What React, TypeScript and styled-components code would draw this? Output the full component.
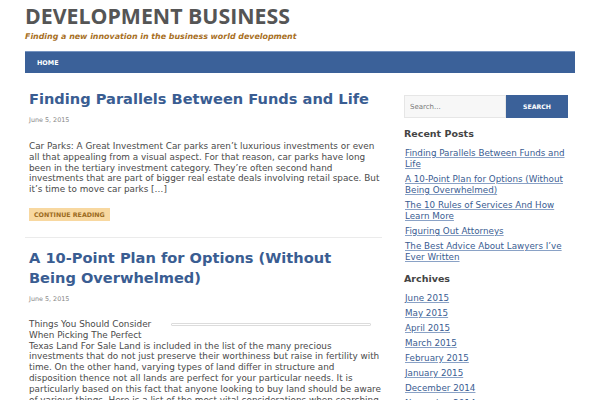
import React from 'react';
import styled, { createGlobalStyle } from 'styled-components';

const GlobalStyle = createGlobalStyle`
  html, body {
    margin: 0;
    padding: 0;
    background: #fff;
    overflow: hidden;
  }
  body {
    font-family: "DejaVu Sans", "Liberation Sans", sans-serif;
    color: #4a4a4a;
  }
`;

const recentPosts = [
  'Finding Parallels Between Funds and Life',
  'A 10-Point Plan for Options (Without Being Overwhelmed)',
  'The 10 Rules of Services And How Learn More',
  'Figuring Out Attorneys',
  'The Best Advice About Lawyers I’ve Ever Written',
];

const archives = [
  'June 2015',
  'May 2015',
  'April 2015',
  'March 2015',
  'February 2015',
  'January 2015',
  'December 2014',
  'November 2014',
];

const App = () => {
  return (
    <>
      <GlobalStyle />
      <Page>
        <Header>
          <SiteTitle>DEVELOPMENT BUSINESS</SiteTitle>
          <Tagline>Finding a new innovation in the business world development</Tagline>
        </Header>
        <Nav>
          <NavItem>HOME</NavItem>
        </Nav>
        <Body>
          <Main>
            <Post $first>
              <PostTitle>Finding Parallels Between Funds and Life</PostTitle>
              <PostDate>June 5, 2015</PostDate>
              <Excerpt $wide>
                Car Parks: A Great Investment Car parks aren’t luxurious investments or even
                <br />
                all that appealing from a visual aspect. For that reason, car parks have long
                <br />
                been in the tertiary investment category. They’re often second hand
                <br />
                investments that are part of bigger real estate deals involving retail space. But
                <br />
                it’s time to move car parks […]
              </Excerpt>
              <ReadMore>CONTINUE READING</ReadMore>
            </Post>
            <Divider />
            <Post>
              <PostTitle>A 10-Point Plan for Options (Without Being Overwhelmed)</PostTitle>
              <PostDate>June 5, 2015</PostDate>
              <LeadRow>
                <LeadHeading>Things You Should Consider When Picking The Perfect</LeadHeading>
                <LeadRule />
              </LeadRow>
              <Excerpt>
                Texas Land For Sale Land is included in the list of the many precious
                investments that do not just preserve their worthiness but raise in fertility
                with time. On the other hand, varying types of land differ in structure and
                disposition thence not all lands are perfect for your particular needs. It is
                particularly based on this fact that anyone looking to buy land should be aware
                of various things. Here is a list of the most vital considerations when searching
                for land.
              </Excerpt>
            </Post>
          </Main>
          <Sidebar>
            <SearchForm>
              <SearchInput placeholder="Search..." />
              <SearchButton>SEARCH</SearchButton>
            </SearchForm>
            <WidgetTitle>Recent Posts</WidgetTitle>
            <LinkList>
              {recentPosts.map((p) => (
                <LinkItem key={p}>
                  <SideLink href="#">{p}</SideLink>
                </LinkItem>
              ))}
            </LinkList>
            <WidgetTitle $spaced>Archives</WidgetTitle>
            <LinkList>
              {archives.map((a) => (
                <LinkItem key={a}>
                  <SideLink href="#">{a}</SideLink>
                </LinkItem>
              ))}
            </LinkList>
          </Sidebar>
        </Body>
      </Page>
    </>
  );
};

const Page = styled.div`
  width: 550px;
  margin: 0 auto;
`;

const Header = styled.header`
  padding-top: 2px;
  height: 49px;
`;

const SiteTitle = styled.h1`
  margin: 0;
  font-family: "Open Sans", sans-serif;
  font-weight: 700;
  font-size: 21.3px;
  line-height: 28px;
  color: #555;
`;

const Tagline = styled.p`
  margin: 2px 0 0;
  font-size: 7.9px;
  font-weight: bold;
  font-style: italic;
  line-height: 10px;
  color: #a8701f;
`;

const Nav = styled.nav`
  display: flex;
  height: 21px;
  align-items: center;
  padding: 0 12px;
  background: #3b6199;
  border-top: 1px solid #7593c0;
`;

const NavItem = styled.span`
  color: #fff;
  font-size: 6.4px;
  font-weight: bold;
`;

const Body = styled.div`
  display: flex;
  gap: 18px;
`;

const Main = styled.main`
  width: 361px;
  flex-shrink: 0;
`;

const Post = styled.article<{ $first?: boolean }>`
  padding: ${({ $first }) => ($first ? '16px' : '10px')} 0 0 4px;
`;

const PostTitle = styled.h2`
  margin: 0;
  max-width: 350px;
  font-size: 14.6px;
  line-height: 20px;
  font-weight: bold;
  color: #3a5d92;
`;

const PostDate = styled.div`
  margin-top: 7px;
  font-size: 6.4px;
  line-height: 8px;
  color: #888;
`;

const Excerpt = styled.p<{ $wide?: boolean }>`
  margin: ${({ $wide }) => ($wide ? '17px -12px 0 0' : '0')};
  padding-right: ${({ $wide }) => ($wide ? '0' : '4px')};
  font-size: 8.85px;
  line-height: 10.8px;
  color: #4a4a4a;
`;

const ReadMore = styled.a`
  display: inline-block;
  margin-top: 13px;
  padding: 0 5px;
  height: 13px;
  line-height: 13px;
  background: #f8d8a0;
  color: #9b6a20;
  font-size: 6.3px;
  font-weight: bold;
`;

const Divider = styled.hr`
  margin: 16px 4px 0 0;
  border: 0;
  border-top: 1px solid #ebebeb;
`;

const LeadRow = styled.div`
  display: flex;
  align-items: flex-start;
  margin-top: 16px;
`;

const LeadHeading = styled.div`
  width: 138px;
  font-size: 8.85px;
  line-height: 10.8px;
  color: #4a4a4a;
`;

const LeadRule = styled.div`
  margin: 4px 0 0 4px;
  width: 198px;
  height: 1px;
  border: 1px solid #dcdcdc;
  border-radius: 1px;
`;

const Sidebar = styled.aside`
  width: 164px;
  padding-top: 22px;
`;

const SearchForm = styled.form`
  display: flex;
  height: 23px;
  margin: 0;
`;

const SearchInput = styled.input`
  width: 102px;
  box-sizing: border-box;
  border: 1px solid #e6e6e6;
  background: #f7f7f7;
  padding: 0 5px;
  font-family: "DejaVu Sans", sans-serif;
  font-size: 7px;
  color: #555;
  outline: none;

  &::placeholder {
    color: #777;
  }
`;

const SearchButton = styled.button`
  width: 62px;
  border: 0;
  background: #3b6199;
  color: #fff;
  font-family: "DejaVu Sans", sans-serif;
  font-size: 6.2px;
  font-weight: bold;
  padding: 0;
`;

const WidgetTitle = styled.h3<{ $spaced?: boolean }>`
  margin: ${({ $spaced }) => ($spaced ? '8px' : '10px')} 0 0;
  font-size: 9.5px;
  line-height: 12px;
  font-weight: bold;
  color: #444;
`;

const LinkList = styled.ul`
  list-style: none;
  margin: 6px 0 0;
  padding: 0 0 0 1px;
`;

const LinkItem = styled.li`
  font-size: 8.75px;
  line-height: 11px;
  padding: 2px 0;
`;

const SideLink = styled.a`
  color: #3a5d92;
  text-decoration: underline;
  text-decoration-color: #8aa2c6;
`;

export default App;
